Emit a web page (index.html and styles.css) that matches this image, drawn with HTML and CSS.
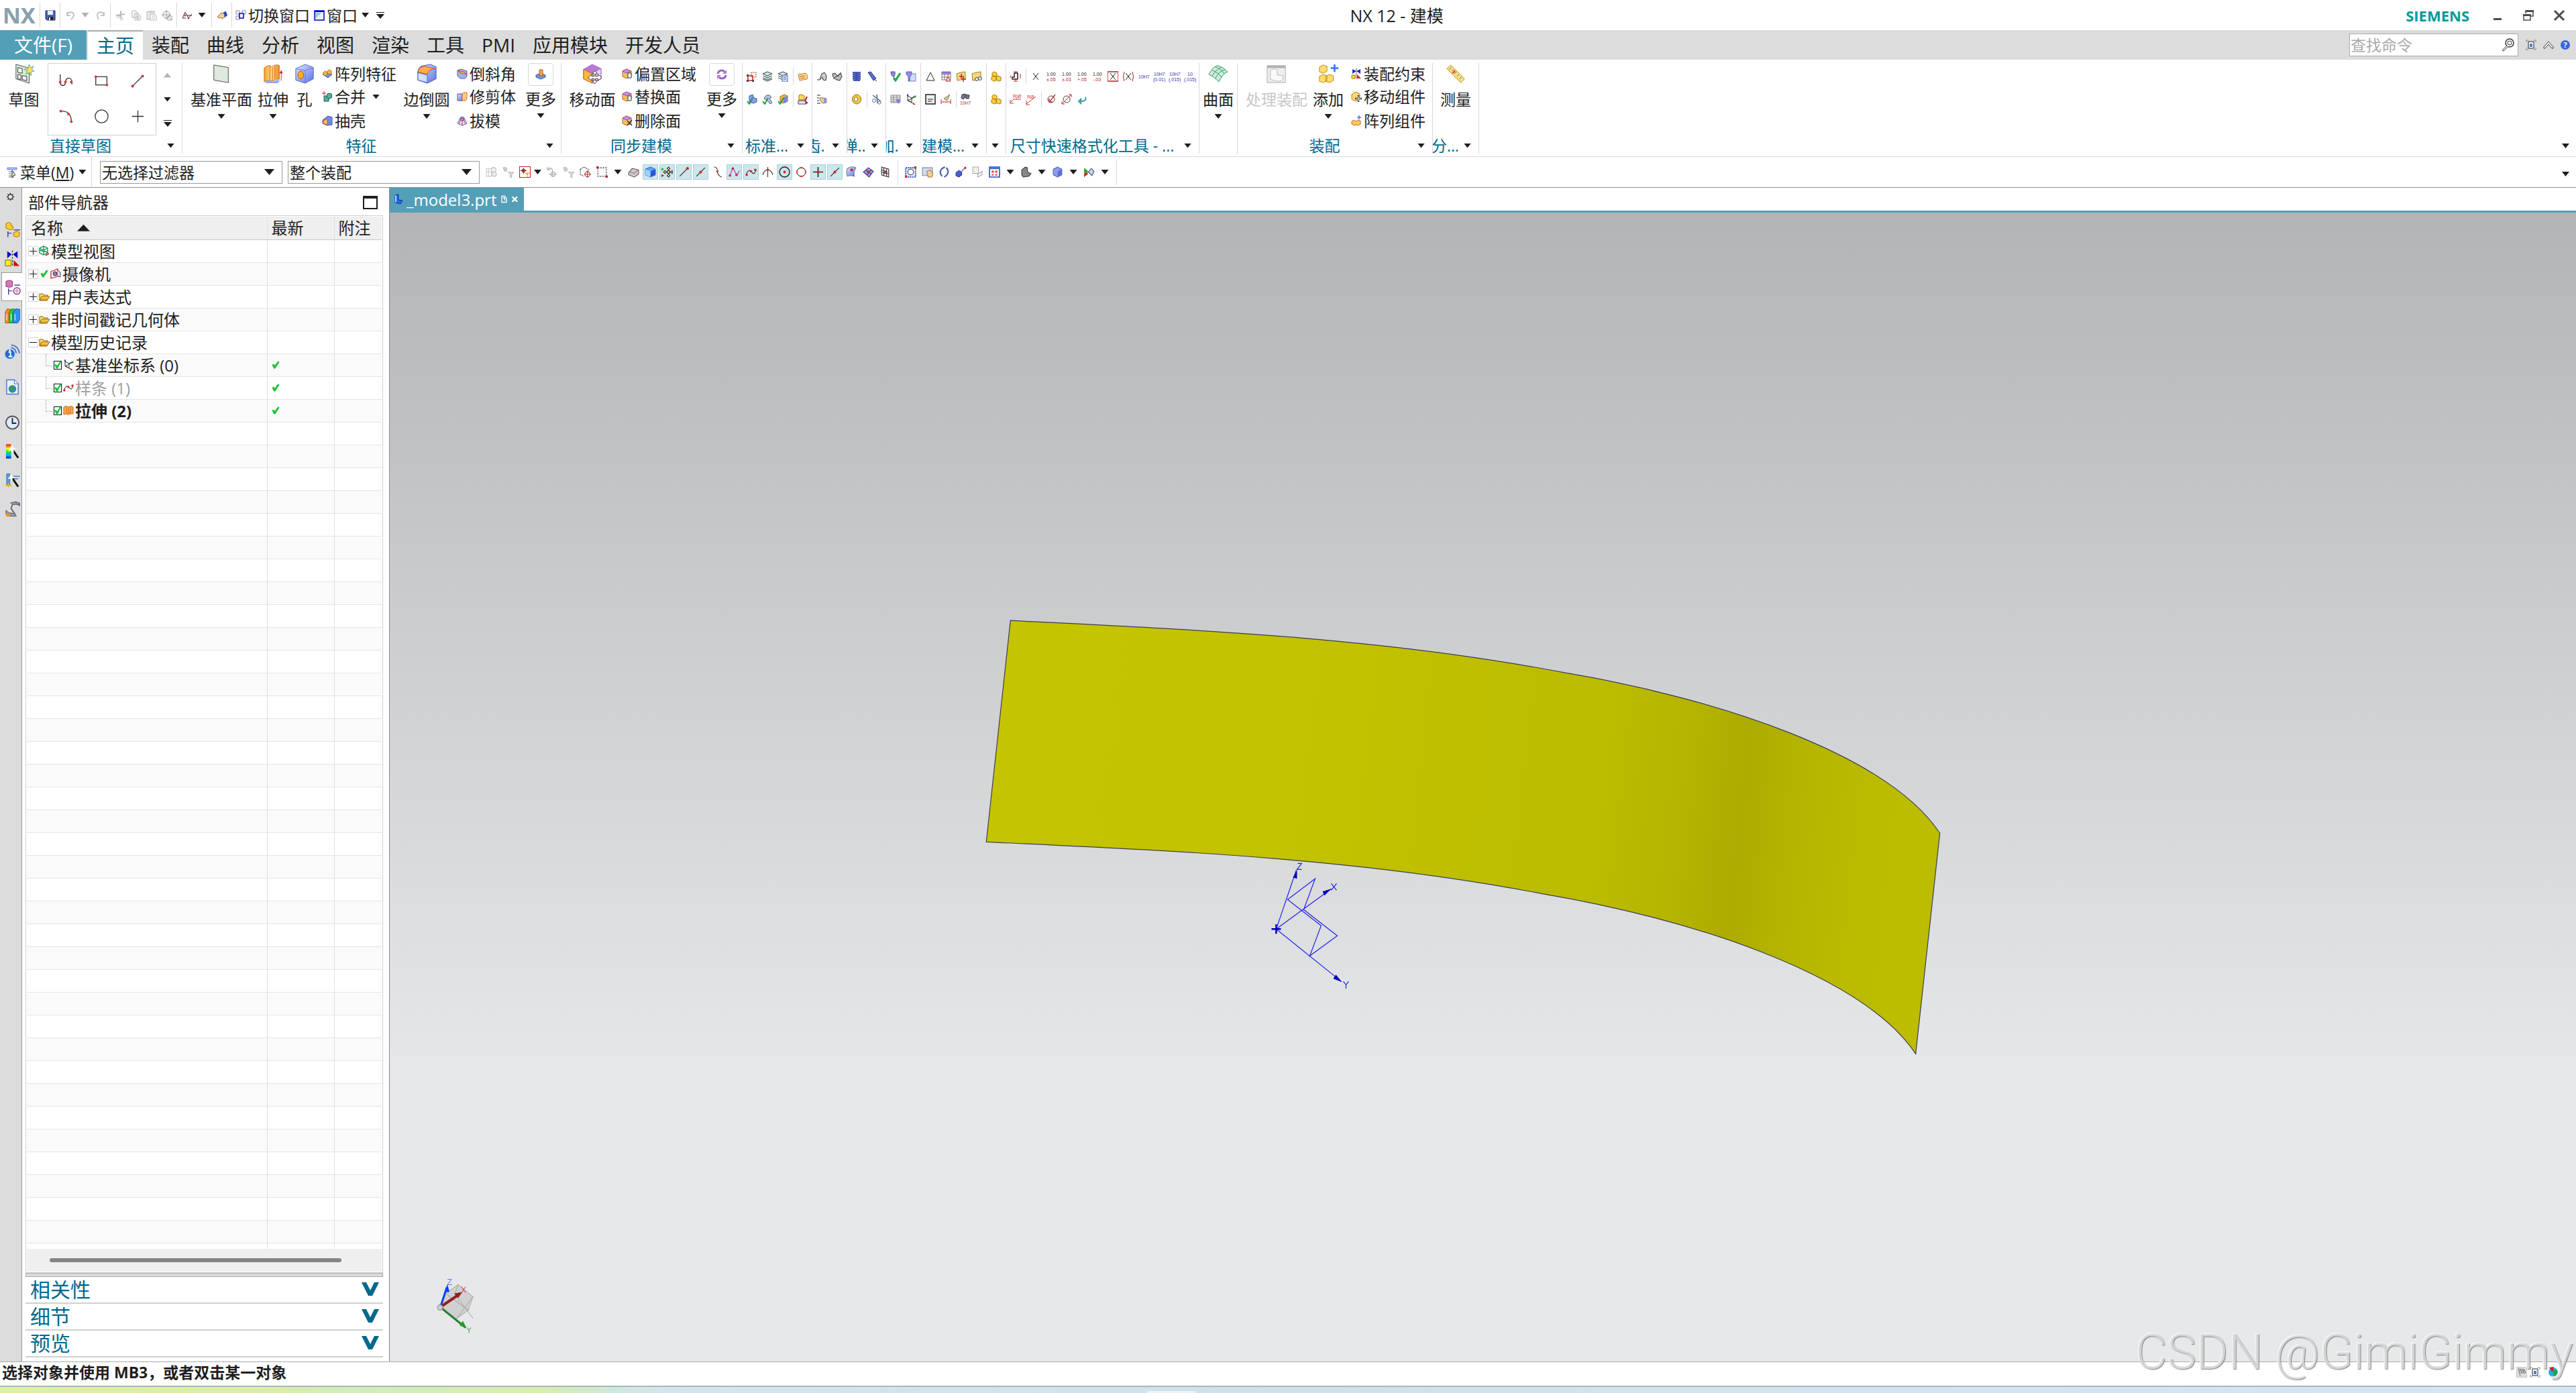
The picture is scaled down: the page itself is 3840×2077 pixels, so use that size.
FILE: index.html
```html
<!DOCTYPE html>
<html lang="zh-CN">
<head>
<meta charset="utf-8">
<title>NX 12 - 建模</title>
<link rel="stylesheet" href="styles.css">
</head>
<body>
<svg class="defs" aria-hidden="true">
<defs>
<linearGradient id="gOrange" x1="0" x2="1"><stop offset="0" stop-color="#f0a030"/><stop offset=".5" stop-color="#ffe08a"/><stop offset="1" stop-color="#e88a20"/></linearGradient>
<linearGradient id="gBlue" x1="0" x2="1" y2="1"><stop offset="0" stop-color="#dfe8ff"/><stop offset="1" stop-color="#5a72e0"/></linearGradient>
<linearGradient id="gFolder" y2="1" x2="0"><stop offset="0" stop-color="#ffe27a"/><stop offset="1" stop-color="#d98a00"/></linearGradient>
<linearGradient id="gRain" y2="1" x2="0"><stop offset="0" stop-color="#f00"/><stop offset=".3" stop-color="#ff0"/><stop offset=".55" stop-color="#0e2"/><stop offset=".8" stop-color="#0af"/><stop offset="1" stop-color="#00c"/></linearGradient>
</defs>
<symbol id="save" viewBox="0 0 16 16"><path d="M1 1h14v14H3l-2-2z" fill="#4a64b8" stroke="#182870"/><path d="M4 1h8v6H4z" fill="#e8f0ff"/><path d="M5 10h7v5H5z" fill="#222"/><path d="M6 11h2v4H6z" fill="#fff"/></symbol>
<symbol id="undo" viewBox="0 0 16 16"><path d="M3 7c1-5 10-5 10 0 0 3-2 5-4 7M3 3v5h5" fill="none" stroke="#c4c4c4" stroke-width="2"/></symbol>
<symbol id="redo" viewBox="0 0 16 16"><path d="M13 7C12 2 3 2 3 7c0 3 1 5 2 7M13 3v5H8" fill="none" stroke="#c4c4c4" stroke-width="2"/></symbol>
<symbol id="cut" viewBox="0 0 16 16"><path d="M8 1v9M1 8l13-2M8 9l-3-1M8 10l1 2" stroke="#bbb" stroke-width="2" fill="none"/><circle cx="4" cy="9.500" r="2" fill="none" stroke="#bbb"/><circle cx="9" cy="13" r="2" fill="none" stroke="#bbb"/></symbol>
<symbol id="copy" viewBox="0 0 16 16"><path d="M2 1h5l3 3v7H2zM6 5h5l3 3v7H6z" fill="#f4f4f4" stroke="#b8b8b8"/><path d="M8 9h4M8 11h4M8 13h4" stroke="#b8b8b8"/></symbol>
<symbol id="paste" viewBox="0 0 16 16"><path d="M1 2h11v12H1z" fill="#e8e8e8" stroke="#b8b8b8"/><path d="M4 1h5v3H4z" fill="#ccc"/><path d="M6 6h6l3 3v6H6z" fill="#fff" stroke="#b8b8b8"/><path d="M8 9h5M8 12h5" stroke="#b8b8b8"/></symbol>
<symbol id="target" viewBox="0 0 16 16"><circle cx="7" cy="7" r="5" fill="none" stroke="#999"/><path d="M7 0v14M0 7h14M9 9h6v6H9zM10 10l4 4" fill="none" stroke="#999"/></symbol>
<symbol id="zig" viewBox="0 0 16 16"><path d="M1 12 5 3l5 9 5-6" fill="none" stroke="#333"/><path d="M1 12h5M8 8h7" stroke="#333"/><circle cx="5" cy="8" r="1.500" fill="#d33"/><circle cx="10" cy="12" r="1.500" fill="#d33"/></symbol>
<symbol id="hand" viewBox="0 0 16 16"><path d="M1 10 7 4l4 1 2 5-5 3-2-2-3 1z" fill="#f3cf98" stroke="#9a7040"/><path d="M10 3l4-1 2 6-4 3z" fill="#3348b0"/></symbol>
<symbol id="switch" viewBox="0 0 16 16"><path d="M1 1h5v5H1zM10 1h5v5h-5zM1 9h5v5H1z" fill="#fff" stroke="#789"/><path d="M6 5h6v7H6z" fill="#fff" stroke="#00c" stroke-width="1.500"/></symbol>
<symbol id="window" viewBox="0 0 16 16"><path d="M1 1h14v14H1z" fill="#e4f2f8" stroke="#00c" stroke-width="1.500"/><path d="M1 1h14v2H1z" fill="#00c"/><path d="M2 4h9L2 13z" fill="#9cc8dc"/></symbol>
<symbol id="more" viewBox="0 0 14 10"><path d="M1 0h12v1H1zM1 3h12L7 10z" fill="#1e1e1e"/></symbol>
<symbol id="plane" viewBox="0 0 32 32"><path d="M4 2 27 6v24L4 26z" fill="#dfeadf" stroke="#444"/></symbol>
<symbol id="sketch" viewBox="0 0 32 32"><path d="M3 1 24 7v24L3 24z" fill="#d9ead9" stroke="#445"/><path d="M6 6l7 2v7l-7-1zM6 17l5 1v7l-5-1zM13 19l7 1v7l-7-2z" fill="#f4f8f4" stroke="#333"/><path d="M24 1l2 5 5-2-3 5 4 3-5 1v6l-3-5-5 3 2-6-5-2 6-1z" fill="#ffe640" stroke="#58a0b8"/></symbol>
<symbol id="extrude" viewBox="0 0 32 32"><path d="M2 7q7-7 12-2 7-5 12-2v22q-5-2-11 3-8-4-13 1z" fill="url(#gOrange)" stroke="#d87010"/><path d="M11 4v22M15 6v22M19 4v20" stroke="#e06010"/><path d="M3 28q8-4 12 1 7-5 12-2l-4 4H5z" fill="#8eaaf0"/><path d="M29 27V12M27 15l2-4 2 4z" stroke="#d22" fill="#d22"/></symbol>
<symbol id="hole" viewBox="0 0 32 32"><path d="M2 8 17 1l13 5v18l-13 7-15-5z" fill="url(#gBlue)" stroke="#4c60c8"/><path d="M2 8l15 3 13-5M17 11v19" fill="none" stroke="#6478d8"/><ellipse cx="10" cy="18" rx="4.500" ry="6" fill="#ffb020" stroke="#d04010"/></symbol>
<symbol id="blend" viewBox="0 0 32 32"><path d="M2 13Q3 4 11 3l11-2 9 4v19l-14 7-15-5z" fill="url(#gBlue)" stroke="#3c50b8"/><path d="M2 13Q4 5 12 4l18 4q-11 0-13 9z" fill="#ffb04a" stroke="#e04020"/><path d="M2 14l15 4v12L2 26z" fill="#cfe0f8" stroke="#5068b8"/></symbol>
<symbol id="array" viewBox="0 0 16 16"><path d="M1 9l7-3 7 3-6 5z" fill="#6f94e0" stroke="#4060b0"/><path d="M2 6l3-2 3 2v3L5 11 2 9zM8 4l3-2 3 2v3l-3 2-3-2z" fill="#f5b553" stroke="#b87020"/></symbol>
<symbol id="unite" viewBox="0 0 16 16"><path d="M3 7h7v8H3z" fill="#58b09a" stroke="#186050"/><circle cx="11" cy="7" r="4" fill="#58b09a" stroke="#186050"/><path d="M3 0v6M0 3h6" stroke="#d22"/></symbol>
<symbol id="shell" viewBox="0 0 16 16"><path d="M1 7 9 1l6 2v11l-7 1-7-3z" fill="#6f8ce0" stroke="#3c50a8"/><path d="M2 8l6-3v9l-6-2z" fill="#ffc070" stroke="#d85020"/></symbol>
<symbol id="chamfer" viewBox="0 0 16 16"><path d="M1 3l5-2 9 3v8l-3 3H5L1 11z" fill="#9fb2ee" stroke="#4a5cb0"/><path d="M1 3l9 2 5 4-9-2z" fill="#ffb04a" stroke="#d84020"/></symbol>
<symbol id="trim" viewBox="0 0 16 16"><path d="M1 4h8v10H1z" fill="url(#gBlue)" stroke="#3c50a8"/><path d="M8 4l2-2h5v10l-2 2H8z" fill="#ffd070" stroke="#d22" stroke-dasharray="2 1"/></symbol>
<symbol id="draft" viewBox="0 0 16 16"><path d="M1 12 5 4h6l4 8-7 3z" fill="#dfe6ff" stroke="#4a62c8"/><circle cx="8" cy="5" r="3" fill="none" stroke="#4a62c8"/><path d="M8 3v12M3 13 7 4M13 13 9 4" stroke="#d22"/></symbol>
<symbol id="boss" viewBox="0 0 16 16"><path d="M1 9l7-3 7 3v3l-7 3-7-3z" fill="#6f94e0" stroke="#3c58a8"/><path d="M6 1h5v9H6z" fill="#f5a553" stroke="#b86010"/></symbol>
<symbol id="moveface" viewBox="0 0 32 32"><path d="M2 9 16 1l14 7v16L16 31 2 24z" fill="#e4d0f4" stroke="#9050b0"/><path d="M2 9l14 7 14-8L16 1z" fill="#b878d8"/><path d="M2 9l14 7v15L2 24z" fill="#f8b840" stroke="#d06010"/><path d="M20 11l4 5h-3v4h4v-3l6 5-6 5v-3h-4v3h3l-4 5-4-5h3v-3h-4v3l-6-5 6-5v3h4v-4h-3z" fill="#fff" stroke="#333"/></symbol>
<symbol id="face" viewBox="0 0 16 16"><path d="M1 4 7 1l7 3v8l-7 3-6-3z" fill="#f0c060" stroke="#c06020"/><path d="M1 4l6-3 7 3-7 3z" fill="#c890e0" stroke="#9050b0"/><path d="M9 7h5v7H9z" fill="#fff" stroke="#333"/></symbol>
<symbol id="facex" viewBox="0 0 16 16"><path d="M1 4 7 1l7 3v8l-7 3-6-3z" fill="#f0c060" stroke="#c06020"/><path d="M1 4l6-3 7 3-7 3z" fill="#c890e0" stroke="#9050b0"/><path d="M8 8l7 7M15 7l-7 8" stroke="#333" stroke-width="1.500"/></symbol>
<symbol id="cycle" viewBox="0 0 16 16"><path d="M2 7c1-6 8-6 10-3M14 9c-1 6-8 6-10 3" fill="none" stroke="#9a5cc0" stroke-width="3"/><path d="M15 1v6H9zM1 15V9h6z" fill="#b878d8"/></symbol>
<symbol id="spline" viewBox="0 0 24 24"><path d="M2 1v13c0 8 9 8 9 0 0-9 11-8 11 0v4" fill="none" stroke="#333" stroke-width="1.500"/><circle cx="2" cy="14" r="2.200" fill="#d33"/><circle cx="11" cy="14" r="2.200" fill="#d33"/><circle cx="21" cy="14" r="2.200" fill="#d33"/></symbol>
<symbol id="rect" viewBox="0 0 24 24"><path d="M2 5h19v14H2z" fill="none" stroke="#333" stroke-width="1.500"/><circle cx="2" cy="5" r="2.200" fill="#d33"/><circle cx="21" cy="19" r="2.200" fill="#d33"/></symbol>
<symbol id="line" viewBox="0 0 24 24"><path d="M3 21 20 4" stroke="#333" stroke-width="1.500"/><circle cx="3" cy="21" r="2.400" fill="#d33"/><circle cx="20" cy="4" r="2.400" fill="#d33"/></symbol>
<symbol id="arc" viewBox="0 0 24 24"><path d="M3 3q17-1 18 17" fill="none" stroke="#333" stroke-width="1.500"/><circle cx="3" cy="3" r="2.200" fill="#d33"/><circle cx="16" cy="8" r="2.200" fill="#d33"/><circle cx="21" cy="21" r="2.200" fill="#d33"/></symbol>
<symbol id="circle" viewBox="0 0 24 24"><circle cx="12" cy="12" r="11" fill="none" stroke="#333" stroke-width="1.500"/></symbol>
<symbol id="plus" viewBox="0 0 24 24"><path d="M12 2v20M2 12h20" stroke="#333" stroke-width="1.500"/></symbol>
<symbol id="redsq" viewBox="0 0 16 16"><path d="M2 7h7v7H2z" fill="#fff" stroke="#c22" stroke-width="1.500"/><path d="M7 2h7v7H7z" fill="none" stroke="#c22" stroke-dasharray="2 1"/><path d="M0 5h3v3H0zM8 13h3v3H8zM0 13h3v3H0z" fill="#444"/></symbol>
<symbol id="layers" viewBox="0 0 16 16"><path d="M1 4l7-3 7 3-7 3zM1 7l7 3 7-3M1 10l7 3 7-3M1 12l7 3 7-3" fill="#d4e8dc" stroke="#345"/></symbol>
<symbol id="layers2" viewBox="0 0 16 16"><path d="M1 4l7-3 7 3-7 3zM1 7l7 3 7-3M1 10l7 3" fill="#d4e8dc" stroke="#345"/><path d="M7 6h8v10H7z" fill="#cfdcff" stroke="#56a"/><path d="M9 9h4M9 12h4" stroke="#56a"/></symbol>
<symbol id="note" viewBox="0 0 16 16"><path d="M1 5l11-2 3 4-1 5-11 2z" fill="#ffd890" stroke="#c87830"/><path d="M3 8l8-1M4 11l7-1" stroke="#c86020"/></symbol>
<symbol id="okblue" viewBox="0 0 16 16"><path d="M4 3l5-2 2 5 4 1v5l-5 2-6-2z" fill="#7fa0e8" stroke="#3c58b0"/><path d="M1 11l3 4 5-9" fill="none" stroke="#1fa030" stroke-width="2"/></symbol>
<symbol id="okwork" viewBox="0 0 16 16"><path d="M3 7q2-6 8-5l3 3-3 2 4 6-3 2-5-6z" fill="#b8c8e8" stroke="#456"/><path d="M1 11l3 4 5-9" fill="none" stroke="#1fa030" stroke-width="2"/></symbol>
<symbol id="okorange" viewBox="0 0 16 16"><path d="M4 4l6-3 5 2v8l-6 3-5-2z" fill="#f7b040" stroke="#c06010"/><path d="M9 5l6-2v8l-6 3z" fill="#6f8ce0"/><path d="M1 11l3 4 5-9" fill="none" stroke="#1fa030" stroke-width="2"/></symbol>
<symbol id="edit" viewBox="0 0 16 16"><path d="M2 2l4-1 4 2v6H2z" fill="#ffd860" stroke="#a07010"/><path d="M1 10h11v5H1z" fill="#fff" stroke="#334"/><path d="M3 12h1M6 12h1M9 12h1" stroke="#334"/><path d="M14 4l-3 7" stroke="#c22" stroke-width="2"/><path d="M11 10l5 3-4 3z" fill="#b020b0"/></symbol>
<symbol id="gear" viewBox="0 0 16 16"><path d="M1 13h4l3-9 4-2 3 5-1 7-4-1-1-4-4 4" fill="#ccc" stroke="#333"/></symbol>
<symbol id="gear2" viewBox="0 0 16 16"><path d="M1 4l4-1 4 5 4-5 2 5-3 6-5-1-5-4z" fill="#bbb" stroke="#333"/><path d="M2 12L14 2" stroke="#333"/></symbol>
<symbol id="pick" viewBox="0 0 16 16"><path d="M1 2h5M1 6h3M1 10h3M1 14h5" stroke="#222"/><path d="M5 6h6l4 1v6l-6 1-3-4z" fill="#f3cf98" stroke="#9a7040"/><path d="M11 7h4v6h-4z" fill="#8c9ae0"/></symbol>
<symbol id="spring" viewBox="0 0 16 16"><path d="M2 2h12M2 5h12M2 8h12M2 11h12M3 14h10" stroke="#4a5cc0" stroke-width="1.800"/><path d="M2 3l12 1M2 6l12 1M2 9l12 1M2 12l12 1" stroke="#2a3a90"/></symbol>
<symbol id="spring2" viewBox="0 0 16 16"><path d="M2 2l4-1 8 10-4 3z" fill="#5a6cd0" stroke="#2a3a90"/><path d="M11 12l4 3" stroke="#2a3a90"/></symbol>
<symbol id="ring" viewBox="0 0 16 16"><ellipse cx="8" cy="8" rx="6.500" ry="7" fill="#f0c840" stroke="#907010"/><ellipse cx="7" cy="8" rx="2.500" ry="3.500" fill="#fff" stroke="#907010"/></symbol>
<symbol id="scissor" viewBox="0 0 16 16"><path d="M2 2l12 9M8 1l1 13" stroke="#567" stroke-width="1.500"/><circle cx="4" cy="10" r="2.500" fill="none" stroke="#56b"/><circle cx="12" cy="13" r="2.200" fill="none" stroke="#56b"/></symbol>
<symbol id="mill" viewBox="0 0 16 16"><path d="M1 1h6v4L5 9 2 6z" fill="#8c8ce0" stroke="#44a"/><path d="M5 10l3 4 7-11" fill="none" stroke="#22a838" stroke-width="3"/></symbol>
<symbol id="millp" viewBox="0 0 16 16"><path d="M6 4h9v11H6z" fill="#cfdcff" stroke="#78a"/><path d="M1 1h8v4L6 9v6H4V8L1 5z" fill="#8c8ce0" stroke="#66a"/></symbol>
<symbol id="grid" viewBox="0 0 16 16"><path d="M1 2h14v11H1zM1 5h14M1 8h14M1 11h14M5 2v11M10 2v11" fill="#e8eef8" stroke="#888"/><path d="M9 8h5v3l-2 4z" fill="#7a7ae0"/></symbol>
<symbol id="csys" viewBox="0 0 16 16"><path d="M3 0v10M3 10l12-6M3 10l10 5M3 3l6 3v7L3 9M9 6l5-3" fill="none" stroke="#333"/><path d="M2 3l1-3 1 3z" fill="#00c"/><path d="M12 4l4-2-1 4z" fill="#2a2"/><path d="M11 13l4 3h-4z" fill="#d22"/></symbol>
<symbol id="tri" viewBox="0 0 16 16"><path d="M8 2l6 12H2z" fill="none" stroke="#222"/></symbol>
<symbol id="table" viewBox="0 0 16 16"><path d="M2 1h13v12H2zM2 5h13M2 9h13M6 3v10M11 3v10" fill="#fff" stroke="#777"/><path d="M2 1h13v3H2z" fill="#9070d8"/><path d="M11 8l4 7H8z" fill="#f0d0d0" stroke="#c22"/></symbol>
<symbol id="folderp" viewBox="0 0 16 16"><path d="M1 4l6-2 7-1v11l-12 2z" fill="#f5d880" stroke="#a08020"/><path d="M8 4v7M5 8h7M11 9v7M8 12h7" stroke="#c22" stroke-width="1.500"/></symbol>
<symbol id="folderg" viewBox="0 0 16 16"><path d="M1 4l6-2 7-1v11l-12 2z" fill="#f5d880" stroke="#a08020"/><circle cx="8" cy="12" r="2.500" fill="#eee" stroke="#444"/><circle cx="13" cy="11" r="2.500" fill="#eee" stroke="#444"/></symbol>
<symbol id="form" viewBox="0 0 16 16"><path d="M1 1h14v14H1z" fill="#eee" stroke="#222" stroke-width="1.500"/><path d="M4 8h8M4 11h6" stroke="#222"/></symbol>
<symbol id="dim" viewBox="0 0 16 16"><path d="M1 8v7M15 8v7M1 12h14" stroke="#c22"/><path d="M14 1l-4 9-5-3z" fill="#d8d060" stroke="#778"/></symbol>
<symbol id="cubes" viewBox="0 0 16 16"><path d="M2 3l3-2 4 2v4l-3 1-4-1zM1 9l3-2 4 2v5l-3 1-4-2zM8 9l3-2 4 2v5l-3 1-4-2z" fill="#ffd040" stroke="#a87808"/></symbol>
<symbol id="ibeam" viewBox="0 0 16 16"><path d="M5 1h6M5 15h6M8 12v3M8 1v3M0 5v6M15 4v7M0 8h2" stroke="#c22"/><path d="M6 3h5v9H3V9h3z" fill="#fff" stroke="#222" stroke-width="1.500"/></symbol>
<symbol id="tx" viewBox="0 0 16 16"><path d="M4 3l8 10M12 3L4 13" stroke="#222"/></symbol>
<symbol id="txb" viewBox="0 0 16 16"><path d="M0 1h16v14H0z" fill="#fff" stroke="#a22" stroke-width="1.500"/><path d="M4 3l8 10M12 3L4 13" stroke="#222"/></symbol>
<symbol id="txp" viewBox="0 0 16 16"><path d="M2 1Q-1 8 2 15M14 1q3 7 0 14" fill="none" stroke="#a22"/><path d="M4 3l8 10M12 3L4 13" stroke="#222"/></symbol>
<symbol id="dia" viewBox="0 0 16 16"><circle cx="8" cy="8" r="5" fill="none" stroke="#444"/><path d="M14 1L6 11M5 7v5h5" fill="none" stroke="#c22" stroke-width="1.300"/></symbol>
<symbol id="dia2" viewBox="0 0 16 16"><circle cx="8" cy="8" r="5" fill="none" stroke="#444"/><path d="M15 1L1 15M11 1h4v4M1 11v4h4" fill="none" stroke="#c22"/></symbol>
<symbol id="ret" viewBox="0 0 16 16"><path d="M13 5q2 6-6 6M6 8l-3 3 3 3z" fill="none" stroke="#3aa0a0" stroke-width="2"/></symbol>
<symbol id="surf" viewBox="0 0 32 32"><path d="M1 17Q8 4 15 3q9 2 16 10-9 3-14 16Q11 21 1 17z" fill="#cfeadb" stroke="#2a9860"/><path d="M6 10q10 4 16 12M11 5q9 3 15 11M6 20q6-11 15-14M11 24Q17 12 27 9" fill="none" stroke="#2a9860"/></symbol>
<symbol id="proc" viewBox="0 0 32 32"><path d="M1 3h29v27H1z" fill="#eee" stroke="#aaa"/><path d="M1 3h29v4H1z" fill="#b4b4b4"/><path d="M6 11l6-3 5 2v8l9 1v7l-7 2-13-3z" fill="#fafafa" stroke="#bbb"/></symbol>
<symbol id="add" viewBox="0 0 32 32"><path d="M2 5l6-3 6 2v8l-6 3-6-2zM2 20l6-3 6 2v8l-6 3-6-2zM12 20l6-3 6 2v8l-6 3-6-2z" fill="#ffdc70" stroke="#b88818"/><path d="M26 1v12M20 7h12" stroke="#3a80f0" stroke-width="3"/></symbol>
<symbol id="constr" viewBox="0 0 16 16"><path d="M2 1l6 3-6 4zM14 1L8 4l6 4z" fill="#22c"/><path d="M8 0v16" stroke="#222" stroke-dasharray="2 1"/><path d="M1 10h5v5H1z" fill="#ffe620" stroke="#a07010"/><path d="M9 9l6 6H9z" fill="#c22"/></symbol>
<symbol id="movec" viewBox="0 0 16 16"><path d="M1 5l6-4 6 3v7l-6 4-6-3z" fill="#ffd878" stroke="#b88020"/><path d="M11 6v10M6 11h10" stroke="#222" stroke-width="2.500"/><path d="M11 7v8M7 11h8" stroke="#fff"/></symbol>
<symbol id="arrc" viewBox="0 0 16 16"><path d="M1 9l3-2 3 2 3-2 4 1v5l-3 2-3-1-3 1-4-2z" fill="#ffc860" stroke="#b87810"/><path d="M12 0v6M9 3h6" stroke="#3a80f0" stroke-width="1.500"/></symbol>
<symbol id="ruler" viewBox="0 0 32 32"><path d="M8 2l22 22-6 6L2 8z" fill="#ffe27a" stroke="#a88828"/><path d="M9 6l-3 3M13 9l-3 3M17 13l-3 3M21 17l-3 3M25 21l-3 3" stroke="#24c"/><path d="M15 11l-4 4" stroke="#d22" stroke-width="2"/></symbol>
<symbol id="menu" viewBox="0 0 16 16"><path d="M1 1h14v3H1z" fill="#a8baf4" stroke="#6f8ce8"/><path d="M3 7h8M3 10h8M3 13h8M3 15h8" stroke="#777"/><path d="M8 5l5 7-3 1-2 3z" fill="#ddd" stroke="#444"/></symbol>
<symbol id="ghost" viewBox="0 0 16 16"><path d="M1 3h7v11H1zM4 3v11M1 8h7" fill="none" stroke="#c8c8c8"/><circle cx="11" cy="5" r="3.500" fill="#eee" stroke="#bbb"/><circle cx="12" cy="11" r="3" fill="#eee" stroke="#bbb"/></symbol>
<symbol id="ghost2" viewBox="0 0 16 16"><path d="M1 2q6-2 5 4L3 7z" fill="#ccc" stroke="#bbb"/><path d="M8 8h8l-3 3v5h-2v-5z" fill="#ddd" stroke="#bbb"/></symbol>
<symbol id="filter" viewBox="0 0 16 16"><path d="M0 0h16v16H0z" fill="#fff" stroke="#c22" stroke-width="2"/><circle cx="6" cy="6" r="2" fill="none" stroke="#722"/><path d="M6 2v8M2 6h8" stroke="#722"/><path d="M8 9h7l-3 3v3h-1v-3z" fill="#f5b020"/></symbol>
<symbol id="ghost3" viewBox="0 0 16 16"><path d="M2 5q4-5 7 0v10M2 1v4h4M4 11h11" fill="none" stroke="#bbb" stroke-width="1.500"/><circle cx="10" cy="11" r="3" fill="none" stroke="#aaa"/></symbol>
<symbol id="dotcube" viewBox="0 0 16 16"><path d="M1 4l5-3 6 3v5M1 4v7l5 3" fill="none" stroke="#333" stroke-dasharray="2 1"/><circle cx="11" cy="11" r="3.500" fill="none" stroke="#c22"/><path d="M11 6v10M6 11h10" stroke="#c22"/></symbol>
<symbol id="marquee" viewBox="0 0 16 16"><path d="M2 2h12v12H2z" fill="none" stroke="#333" stroke-dasharray="2 1.500"/><path d="M0 0h3v3H0zM13 13h3v3h-3z" fill="#c22"/></symbol>
<symbol id="shaded" viewBox="0 0 16 16"><path d="M1 9l5-6 9 2v6l-6 4-8-3z" fill="#ccc" stroke="#555"/><path d="M3 8l6 2 5-5" fill="none" stroke="#c66"/></symbol>
<symbol id="cube" viewBox="0 0 16 16"><path d="M1 4l7-3 7 3v8l-7 3-7-3z" fill="#58a8f8" stroke="#4858c8"/><path d="M8 7l7-3v8l-7 3z" fill="#2858d8"/><path d="M1 4l7 3v8l-7-3z" fill="#9cd4ff"/></symbol>
<symbol id="cubeb" viewBox="0 0 16 16"><path d="M2 4l6-3 6 3v8l-6 3-6-3z" fill="#8c9cf0" stroke="#4858b8"/><path d="M8 7l6-3v8l-6 3z" fill="#6070d0"/></symbol>
<symbol id="snap" viewBox="0 0 16 16"><path d="M0 2l4 2-4 2z" fill="#2a2"/><path d="M0 11l4 2-4 2z" fill="#c22"/><path d="M10 1l2 2-2 2-2-2zM10 11l2 2-2 2-2-2zM5 6l2 2-2 2-2-2zM15 6l1 2-1 2-2-2z" fill="#fff" stroke="#222"/><circle cx="10" cy="8" r="2" fill="#ffe020" stroke="#222"/></symbol>
<symbol id="lend" viewBox="0 0 16 16"><path d="M2 14L13 3" stroke="#222"/><circle cx="13" cy="3" r="2" fill="#d22"/></symbol>
<symbol id="lmid" viewBox="0 0 16 16"><path d="M2 14L14 2" stroke="#222"/><circle cx="8" cy="8" r="2" fill="#d22"/></symbol>
<symbol id="scurve" viewBox="0 0 16 16"><path d="M3 1q5 0 5 6t6 8" fill="none" stroke="#333"/><circle cx="8" cy="7" r="1.500" fill="#d22"/></symbol>
<symbol id="pole" viewBox="0 0 16 16"><path d="M2 13L6 2l6 11 3-7" fill="none" stroke="#a2c"/><circle cx="2" cy="13" r="1.700" fill="#d22"/><circle cx="6" cy="3" r="1.700" fill="#d22"/><circle cx="11" cy="12" r="1.700" fill="#d22"/></symbol>
<symbol id="wave" viewBox="0 0 16 16"><path d="M1 12Q5 2 9 8t6-4" fill="none" stroke="#222"/><circle cx="2" cy="12" r="1.700" fill="#d22"/><circle cx="8" cy="7" r="1.700" fill="#d22"/><circle cx="14" cy="5" r="1.700" fill="#d22"/></symbol>
<symbol id="inter" viewBox="0 0 16 16"><path d="M8 1v14M1 12q2-7 7-7t7 7" fill="none" stroke="#333"/><circle cx="8" cy="5" r="1.700" fill="#d22"/></symbol>
<symbol id="center" viewBox="0 0 16 16"><circle cx="8" cy="8" r="7" fill="none" stroke="#222" stroke-width="1.300"/><circle cx="8" cy="8" r="1.800" fill="#d22"/></symbol>
<symbol id="quad" viewBox="0 0 16 16"><circle cx="8" cy="8" r="6" fill="none" stroke="#444"/><path d="M6 1h4v2H6zM6 13h4v2H6zM1 6h2v4H1zM13 6h2v4h-2z" fill="#d44"/></symbol>
<symbol id="point" viewBox="0 0 16 16"><path d="M8 1v14M1 8h14" stroke="#222" stroke-width="1.500"/><circle cx="8" cy="8" r="1.800" fill="#d22"/></symbol>
<symbol id="onface" viewBox="0 0 16 16"><path d="M2 3q6-4 12-1-4 6-2 12-5-2-10 0-2-6 0-11z" fill="url(#gBlue)" stroke="#67a"/><circle cx="8" cy="5" r="2" fill="#d22"/></symbol>
<symbol id="mesh" viewBox="0 0 16 16"><path d="M1 8l7-6 7 5-6 8z" fill="#9a9ad8" stroke="#338"/><path d="M4 5l8 6M6 12l6-7" stroke="#338"/><circle cx="8" cy="8" r="1.800" fill="#d22"/></symbol>
<symbol id="gridp" viewBox="0 0 16 16"><path d="M3 1l10 3v11L3 12zM3 5l10 3M3 8l10 3M6 2v11M10 3v11" fill="none" stroke="#333"/><circle cx="8" cy="8" r="1.500" fill="#d22"/></symbol>
<symbol id="zoomb" viewBox="0 0 16 16"><path d="M1 2h14v13H1z" fill="#dfe6ff" stroke="#24c" stroke-dasharray="2 1" stroke-width="1.500"/><circle cx="8" cy="8" r="4" fill="#fff" stroke="#446"/><path d="M13 0h3v3h-3zM0 13h3v3H0z" fill="#c22"/></symbol>
<symbol id="pan" viewBox="0 0 16 16"><path d="M1 2h14v11H1z" fill="#cfdcf8" stroke="#78a"/><path d="M7 7l5-2 4 5-2 5H9z" fill="#f3cf98" stroke="#a07840"/></symbol>
<symbol id="rotate" viewBox="0 0 16 16"><path d="M5 14Q0 8 5 3l4-2M11 2q5 5 0 11l-3 2" fill="none" stroke="#4a5ca8" stroke-width="2"/></symbol>
<symbol id="persp" viewBox="0 0 16 16"><path d="M1 9l4-3 4 2v4l-4 3-4-2z" fill="#4a5cd8" stroke="#339"/><path d="M9 7l5-5" stroke="#99d" stroke-width="2"/><circle cx="14" cy="2" r="1.500" fill="#d22"/></symbol>
<symbol id="ghost4" viewBox="0 0 16 16"><path d="M1 1h8v9H1zM8 11l6-4v5l-6 3zM3 4h1M6 4h1M3 7h1" fill="#f4f4f4" stroke="#aaa"/></symbol>
<symbol id="views" viewBox="0 0 16 16"><path d="M1 1h14v14H1z" fill="#fff" stroke="#2a4cc0" stroke-width="1.500"/><path d="M1 1h14v3H1z" fill="#4a70d8"/><path d="M4 6h3v3H4zM9 6h3v3H9zM4 11h3v2H4zM9 11h3v2H9z" fill="#d44"/></symbol>
<symbol id="bracket" viewBox="0 0 16 16"><path d="M2 5l5-4 3 1v6l5 2-3 4-8 1-2-3z" fill="#888" stroke="#333"/></symbol>
<symbol id="clip" viewBox="0 0 16 16"><path d="M1 2l6 5-6 3z" fill="#2a2"/><path d="M1 10l5-2v3l-5 4z" fill="#c22"/><path d="M7 8l4-5 4 4-3 6z" fill="#ccd4f4" stroke="#446"/></symbol>
<symbol id="screen" viewBox="0 0 16 16"><path d="M1 4V1h3M12 1h3v3M15 12v3h-3M4 15H1v-3" fill="none" stroke="#888"/><path d="M4 3h8v10H4z" fill="#fff" stroke="#222"/><path d="M6 6h4v5H6z" fill="#4a80d8"/></symbol>
<symbol id="search" viewBox="0 0 20 20"><circle cx="13" cy="7" r="6" fill="none" stroke="#333" stroke-width="1.500"/><circle cx="13" cy="7" r="3" fill="none" stroke="#333"/><path d="M9 11l-7 7 2 1 7-7" fill="#fff" stroke="#333"/></symbol>
<symbol id="collapse" viewBox="0 0 16 16"><path d="M8 3l7 8v2h-2L8 7l-5 6H1v-2z" fill="#fff" stroke="#333"/></symbol>
<symbol id="cog" viewBox="0 0 16 16"><path d="M8 1v14M1 8h14M3 3l10 10M13 3L3 13" stroke="#222" stroke-width="1.500"/><circle cx="8" cy="8" r="4.500" fill="#ddd" stroke="#222" stroke-width="1.500"/></symbol>
<symbol id="asmnav" viewBox="0 0 24 24"><path d="M2 3l4-2 4 2v3l3 1v4l-4 2-7-3zM14 17l5-2 4 2v5l-5 2-4-2z" fill="#ffd020" stroke="#a87008"/><path d="M5 15v9M5 18h6M14 13h10" stroke="#22a" stroke-width="1.300"/></symbol>
<symbol id="connav" viewBox="0 0 24 24"><path d="M4 1l7 5-7 6zM20 1l-7 5 7 6z" fill="#00c"/><path d="M12 0v24" stroke="#222" stroke-dasharray="3 2"/><path d="M1 15h9v9H1z" fill="#ffee20" stroke="#806010"/><path d="M14 15l9 9h-9z" fill="#c00"/></symbol>
<symbol id="partnav" viewBox="0 0 24 24"><path d="M1 3q5-3 10 0v8q-5 3-10 0z" fill="#d878b8" stroke="#803070"/><path d="M5 14v10M5 18h6M14 9h9" stroke="#22a" stroke-width="1.300"/><circle cx="18" cy="18" r="5" fill="#fff" stroke="#903080" stroke-width="1.500"/><circle cx="18" cy="18" r="1.800" fill="none" stroke="#903080"/></symbol>
<symbol id="books" viewBox="0 0 24 24"><path d="M1 6l3-5 6 1-3 4v17H1z" fill="#f09020" stroke="#a85808"/><path d="M7 6l4-5 6 1-4 4v17H7z" fill="#30c840" stroke="#108020"/><path d="M13 6l4-5 7 1v15l-4 6h-7z" fill="#3090f0" stroke="#1050a0"/><path d="M3 9v10M10 9v10M16 9v10" stroke="#fff"/></symbol>
<symbol id="info" viewBox="0 0 24 24"><circle cx="8" cy="16" r="7.500" fill="#1e70d8"/><path d="M6 13h3v7M6 20h6" stroke="#fff" stroke-width="2" fill="none"/><circle cx="8" cy="10.500" r="1.400" fill="#fff"/><path d="M10 6q7 1 8 9M10 2q11 1 13 13" fill="none" stroke="#4a78d0" stroke-width="2"/></symbol>
<symbol id="web" viewBox="0 0 24 24"><path d="M3 1h12l6 6v16H3z" fill="#e8f2ff" stroke="#3868c0" stroke-width="1.300"/><path d="M15 1v6h6" fill="#fff" stroke="#3868c0"/><circle cx="12" cy="15" r="6" fill="#3a80d0"/><path d="M8 12l6-2 2 4-4 5-3-2z" fill="#38a040"/></symbol>
<symbol id="clock" viewBox="0 0 24 24"><circle cx="12" cy="12" r="10" fill="#dfeaff" stroke="#555" stroke-width="2"/><path d="M12 5v8h6" fill="none" stroke="#222" stroke-width="2"/></symbol>
<symbol id="rain" viewBox="0 0 24 24"><path d="M2 1h8v22H2z" fill="url(#gRain)"/><path d="M12 9l9 13" stroke="#111" stroke-width="3"/><path d="M12 1l1 5 5 1-4 3v5l-4-4-5 1 3-5z" fill="#fff"/></symbol>
<symbol id="wand" viewBox="0 0 24 24"><path d="M3 2h5v17H3z" fill="#5a9ce0" stroke="#3a78c0"/><path d="M12 6h12M12 10h9" stroke="#4a80c0" stroke-width="1.500"/><path d="M12 9l9 13" stroke="#111" stroke-width="3"/><path d="M11 2l1 4 4 1-4 2v4l-3-3-4 0 3-4z" fill="#fff"/><path d="M1 20h10M6 17v6" stroke="#f0b020" stroke-width="2"/></symbol>
<symbol id="robot" viewBox="0 0 24 24"><path d="M9 3l8-2 6 2v3l-5-2-6 1-2 6 6 9" fill="none" stroke="#667" stroke-width="2"/><path d="M2 14l5 4 9 1 2 4H8l-6-3z" fill="#99a" stroke="#557"/><circle cx="5" cy="21" r="3" fill="#f09020"/></symbol>
<symbol id="axis3" viewBox="0 0 16 16"><path d="M1 4l6-3 6 3v7l-6 3-6-3zM1 4l6 3 6-3M7 1v13M1 7l12 3" fill="none" stroke="#109050" stroke-width="1.300"/><path d="M10 15l5-3" stroke="#e22" stroke-width="2"/></symbol>
<symbol id="camera" viewBox="0 0 16 16"><path d="M1 5l10-4v11L1 15z" fill="#fff" stroke="#c22" stroke-width="1.300"/><circle cx="7" cy="8" r="3" fill="#88a" stroke="#226"/><path d="M11 3l4 3v7l-4-1" fill="#ddd" stroke="#446"/></symbol>
<symbol id="folder" viewBox="0 0 16 16"><path d="M1 14V4h5l1 2h6v3" fill="#ffe27a" stroke="#8a6000"/><path d="M1 14l3-6h12l-4 6z" fill="url(#gFolder)" stroke="#8a6000"/></symbol>
<symbol id="check" viewBox="0 0 14 14"><path d="M1 7l3-1 1 3 6-8 2 1-7 11H4z" fill="#10d030" stroke="#0a9020" stroke-width=".6"/></symbol>
<symbol id="extr" viewBox="0 0 16 16"><path d="M1 3q4-3 7 0 4-3 7 0v10q-4-1-7 1-4-2-7 0z" fill="#f7b050" stroke="#d86010"/><path d="M5 3v10M8 4v10M11 3v10" stroke="#d86010"/></symbol>
<symbol id="chev" viewBox="0 0 26 20"><path d="M0 0h7l6 12 6-12h7L16 20h-6z" fill="#00688c"/></symbol>
<symbol id="part" viewBox="0 0 16 16"><path d="M3 2l5-1v8l6 1-3 5-8-2z" fill="#2a68e8" stroke="#0830a8"/><path d="M3 2l2 1v9l-2 1z" fill="#a8d0ff"/></symbol>
<symbol id="pin" viewBox="0 0 10 12"><path d="M1 1h5l3 4v6H1zM3 4h3v4" fill="none" stroke="#fff" stroke-width="1.500"/></symbol>
<symbol id="flag" viewBox="0 0 16 16"><path d="M0 0h16v16H0z" fill="#ddd" stroke="#bbb"/><path d="M3 3l3 11M3 3l9 1 2 5H5M6 4l3 5M10 4l1 5M4 6h9" stroke="#777" fill="none"/></symbol>
<symbol id="globe" viewBox="0 0 16 16"><circle cx="8" cy="8" r="7" fill="#20b0e0"/><path d="M8 3l6 3-1 7-4 1-1-5z" fill="#20a040"/><path d="M2 1l7-1-2 8z" fill="#d02020"/></symbol>
</svg>

<header class="titlebar">
  <div class="logo">NX</div>
  <div class="quick">
    <i class="vsep"></i>
    <button class="cell" aria-label="保存"><svg><use href="#save"/></svg></button>
    <i class="vsep"></i>
    <button class="cell" aria-label="撤消"><svg><use href="#undo"/></svg></button>
    <button class="drop off" aria-label="撤消列表"><i class="caret"></i></button>
    <button class="cell" aria-label="重做"><svg><use href="#redo"/></svg></button>
    <i class="vsep"></i>
    <button class="cell" aria-label="剪切"><svg><use href="#cut"/></svg></button>
    <button class="cell" aria-label="复制"><svg><use href="#copy"/></svg></button>
    <button class="cell" aria-label="粘贴"><svg><use href="#paste"/></svg></button>
    <button class="cell" aria-label="重复"><svg><use href="#target"/></svg></button>
    <i class="vsep"></i>
    <button class="cell" aria-label="曲线"><svg><use href="#zig"/></svg></button>
    <button class="drop" aria-label="曲线列表"><i class="caret"></i></button>
    <i class="vsep"></i>
    <button class="cell" aria-label="触控"><svg><use href="#hand"/></svg></button>
    <i class="vsep"></i>
    <button class="named"><svg><use href="#switch"/></svg>切换窗口</button>
    <button class="named"><svg><use href="#window"/></svg>窗口<i class="caret"></i></button>
    <button class="drop" aria-label="更多"><svg class="morei"><use href="#more"/></svg></button>
  </div>
  <h1 class="title">NX 12 - 建模</h1>
  <div class="brand">SIEMENS</div>
  <div class="winctl">
    <button aria-label="最小化"><svg viewBox="0 0 18 18"><path d="M3 13h12v3H3z" fill="#4a4a50"/></svg></button>
    <button aria-label="还原"><svg viewBox="0 0 18 18"><path d="M5 6V2h11v8h-4" fill="none" stroke="#4a4a50" stroke-width="1.500"/><path d="M5 1h12v3H5zM1 7h12v3H1z" fill="#4a4a50"/><path d="M2 8h10v8H2z" fill="none" stroke="#4a4a50" stroke-width="1.500"/></svg></button>
    <button aria-label="关闭"><svg viewBox="0 0 18 18"><path d="M2 2l14 14M16 2L2 16" stroke="#4a4a50" stroke-width="3"/></svg></button>
  </div>
</header>

<nav class="tabs">
  <button class="file">文件(F)</button>
  <button class="tab on">主页</button>
  <button class="tab">装配</button>
  <button class="tab">曲线</button>
  <button class="tab">分析</button>
  <button class="tab">视图</button>
  <button class="tab">渲染</button>
  <button class="tab">工具</button>
  <button class="tab">PMI</button>
  <button class="tab">应用模块</button>
  <button class="tab">开发人员</button>
  <div class="find">
    <input type="search" placeholder="查找命令" aria-label="查找命令">
    <svg><use href="#search"/></svg>
  </div>
  <div class="help">
    <button aria-label="全屏"><svg><use href="#screen"/></svg></button>
    <button aria-label="最小化功能区"><svg><use href="#collapse"/></svg></button>
    <button class="ask" aria-label="帮助">?</button>
  </div>
</nav>

<section class="ribbon">
  <div class="group g-sketch">
    <div class="body">
      <button class="big"><svg><use href="#sketch"/></svg>草图</button>
      <div class="gallery">
        <button aria-label="轮廓"><svg><use href="#spline"/></svg></button>
        <button aria-label="矩形"><svg><use href="#rect"/></svg></button>
        <button aria-label="直线"><svg><use href="#line"/></svg></button>
        <button aria-label="圆弧"><svg><use href="#arc"/></svg></button>
        <button aria-label="圆"><svg><use href="#circle"/></svg></button>
        <button aria-label="点"><svg><use href="#plus"/></svg></button>
      </div>
      <div class="scroller">
        <button class="off" aria-label="上"><i class="caret up"></i></button>
        <button aria-label="下"><i class="caret"></i></button>
        <button aria-label="全部"><svg class="morei"><use href="#more"/></svg></button>
      </div>
    </div>
    <div class="foot"><span>直接草图</span><i class="caret"></i></div>
  </div>
  <div class="group g-feature">
    <div class="body">
      <button class="big"><svg><use href="#plane"/></svg>基准平面<i class="caret"></i></button>
      <button class="big"><svg><use href="#extrude"/></svg>拉伸<i class="caret"></i></button>
      <button class="big"><svg><use href="#hole"/></svg>孔</button>
      <div class="list">
        <button><svg><use href="#array"/></svg>阵列特征</button>
        <button><svg><use href="#unite"/></svg>合并<i class="caret"></i></button>
        <button><svg><use href="#shell"/></svg>抽壳</button>
      </div>
      <button class="big"><svg><use href="#blend"/></svg>边倒圆<i class="caret"></i></button>
      <div class="list">
        <button><svg><use href="#chamfer"/></svg>倒斜角</button>
        <button><svg><use href="#trim"/></svg>修剪体</button>
        <button><svg><use href="#draft"/></svg>拔模</button>
      </div>
      <button class="big"><span class="frame"><svg><use href="#boss"/></svg></span>更多<i class="caret"></i></button>
    </div>
    <div class="foot"><span>特征</span><i class="caret"></i></div>
  </div>
  <div class="group g-sync">
    <div class="body">
      <button class="big"><svg><use href="#moveface"/></svg>移动面</button>
      <div class="list">
        <button><svg><use href="#face"/></svg>偏置区域</button>
        <button><svg><use href="#face"/></svg>替换面</button>
        <button><svg><use href="#facex"/></svg>删除面</button>
      </div>
      <button class="big"><span class="frame"><svg><use href="#cycle"/></svg></span>更多<i class="caret"></i></button>
    </div>
    <div class="foot"><span>同步建模</span><i class="caret"></i></div>
  </div>
  <div class="group g-std">
    <div class="icons">
      <div class="row"><svg><use href="#redsq"/></svg><svg><use href="#layers"/></svg><svg><use href="#layers2"/></svg><i class="vsep"></i><svg><use href="#note"/></svg></div>
      <div class="row"><svg><use href="#okblue"/></svg><svg><use href="#okwork"/></svg><svg><use href="#okorange"/></svg><i class="vsep"></i><svg><use href="#edit"/></svg></div>
    </div>
    <div class="foot"><span>标准...</span><i class="caret"></i></div>
  </div>
  <div class="group g-gear">
    <div class="icons">
      <div class="row"><svg><use href="#gear"/></svg><svg><use href="#gear2"/></svg></div>
      <div class="row"><svg><use href="#pick"/></svg></div>
    </div>
    <div class="foot"><span>齿...</span><i class="caret"></i></div>
  </div>
  <div class="group g-spring">
    <div class="icons">
      <div class="row"><svg><use href="#spring"/></svg><svg><use href="#spring2"/></svg></div>
      <div class="row"><svg><use href="#ring"/></svg><i class="vsep"></i><svg><use href="#scissor"/></svg></div>
    </div>
    <div class="foot"><span>弹...</span><i class="caret"></i></div>
  </div>
  <div class="group g-gear">
    <div class="icons">
      <div class="row"><svg><use href="#mill"/></svg><svg><use href="#millp"/></svg></div>
      <div class="row"><svg><use href="#grid"/></svg><svg><use href="#csys"/></svg></div>
    </div>
    <div class="foot"><span>加...</span><i class="caret"></i></div>
  </div>
  <div class="group g-model">
    <div class="icons">
      <div class="row"><svg><use href="#tri"/></svg><svg><use href="#table"/></svg><svg><use href="#folderp"/></svg><svg><use href="#folderg"/></svg></div>
      <div class="row"><svg><use href="#form"/></svg><svg><use href="#dim"/></svg><i class="vsep"></i><svg class="t" viewBox="0 0 20 20"><path d="M4 3l5-1v5l-3 3-3-2zM10 3l5 1-1 5h-4z" fill="#778" stroke="#334"/><text x="1" y="18" fill="#a33">10H7</text></svg></div>
    </div>
    <div class="foot"><span>建模...</span><i class="caret"></i></div>
  </div>
  <div class="group g-cubes">
    <div class="icons">
      <div class="row"><svg><use href="#cubes"/></svg></div>
      <div class="row"><svg><use href="#cubes"/></svg></div>
    </div>
    <div class="foot only"><i class="caret"></i></div>
  </div>
  <div class="group g-dim">
    <div class="icons">
      <div class="row"><svg><use href="#ibeam"/></svg><i class="vsep"></i><svg><use href="#tx"/></svg>
        <svg class="t" viewBox="0 0 20 20"><text x="3" y="9" fill="#222">1.00</text><text x="3" y="17" fill="#b22">±.05</text></svg>
        <svg class="t" viewBox="0 0 20 20"><text x="3" y="9" fill="#222">1.00</text><text x="3" y="17" fill="#b22">±.03</text></svg>
        <svg class="t" viewBox="0 0 20 20"><text x="3" y="9" fill="#222">1.00</text><text x="3" y="17" fill="#b22">+.05</text></svg>
        <svg class="t" viewBox="0 0 20 20"><text x="3" y="9" fill="#222">1.00</text><text x="3" y="17" fill="#b22">-.03</text></svg>
        <svg><use href="#txb"/></svg><svg><use href="#txp"/></svg>
        <svg class="t" viewBox="0 0 20 20"><text x="2" y="13" fill="#33b">10H7</text></svg>
        <svg class="t" viewBox="0 0 20 20"><text x="2" y="9" fill="#33b">10H7</text><text x="1" y="17" fill="#33b">(0.01)</text></svg>
        <svg class="t" viewBox="0 0 20 20"><text x="2" y="9" fill="#33b">10H7</text><text x="1" y="17" fill="#33b">(.015)</text></svg>
        <svg class="t" viewBox="0 0 20 20"><text x="6" y="9" fill="#33b">10</text><text x="1" y="17" fill="#33b">(.015)</text></svg></div>
      <div class="row"><svg class="t" viewBox="0 0 20 20"><path d="M2 15l5-5h11M2 11v5h5" fill="none" stroke="#c33"/><text x="6" y="8" fill="#c33">R|Ø</text></svg><svg class="t" viewBox="0 0 20 20"><path d="M3 17L17 6M3 12v6h5" fill="none" stroke="#c33"/><text x="4" y="9" fill="#c33">RØ</text></svg><i class="vsep"></i><svg><use href="#dia"/></svg><svg><use href="#dia2"/></svg><svg><use href="#ret"/></svg></div>
    </div>
    <div class="foot"><span>尺寸快速格式化工具 - ...</span><i class="caret"></i></div>
  </div>
  <div class="group g-surf">
    <div class="body"><button class="big"><svg><use href="#surf"/></svg>曲面<i class="caret"></i></button></div>
  </div>
  <div class="group g-asm">
    <div class="body">
      <button class="big" disabled><svg><use href="#proc"/></svg>处理装配</button>
      <button class="big"><svg><use href="#add"/></svg>添加<i class="caret"></i></button>
      <div class="list">
        <button><svg><use href="#constr"/></svg>装配约束</button>
        <button><svg><use href="#movec"/></svg>移动组件</button>
        <button><svg><use href="#arrc"/></svg>阵列组件</button>
      </div>
    </div>
    <div class="foot"><span>装配</span><i class="caret"></i></div>
  </div>
  <div class="group g-measure">
    <div class="body"><button class="big"><svg><use href="#ruler"/></svg>测量</button></div>
    <div class="foot"><span>分...</span><i class="caret"></i></div>
  </div>
  <button class="overflow" aria-label="功能区选项"><i class="caret"></i></button>
</section>

<section class="selbar">
  <button class="menu"><svg><use href="#menu"/></svg>菜单(<u>M</u>)<i class="caret"></i></button>
  <i class="vsep"></i>
  <div class="combo c1"><select aria-label="类型过滤器"><option>无选择过滤器</option></select><i class="caret wide"></i></div>
  <div class="combo c2"><select aria-label="选择范围"><option>整个装配</option></select><i class="caret wide"></i></div>
  <div class="tools">
    <svg><use href="#ghost"/></svg><svg><use href="#ghost2"/></svg><svg><use href="#filter"/></svg><i class="caret near"></i>
    <svg><use href="#ghost3"/></svg><svg><use href="#ghost2"/></svg><svg><use href="#dotcube"/></svg><svg><use href="#marquee"/></svg><span class="dd"><i class="caret"></i></span>
    <svg><use href="#shaded"/></svg><svg class="on"><use href="#cube"/></svg><svg class="on"><use href="#snap"/></svg><svg class="on"><use href="#lend"/></svg><svg class="on"><use href="#lmid"/></svg><svg><use href="#scurve"/></svg><svg class="on"><use href="#pole"/></svg><svg class="on"><use href="#wave"/></svg><svg><use href="#inter"/></svg><svg class="on"><use href="#center"/></svg><svg><use href="#quad"/></svg><svg class="on"><use href="#point"/></svg><svg class="on"><use href="#lmid"/></svg><svg><use href="#onface"/></svg><svg><use href="#mesh"/></svg><svg><use href="#gridp"/></svg>
    <i class="vsep"></i>
    <svg><use href="#zoomb"/></svg><svg><use href="#pan"/></svg><svg><use href="#rotate"/></svg><svg><use href="#persp"/></svg><svg><use href="#ghost4"/></svg><svg><use href="#views"/></svg><span class="dd"><i class="caret"></i></span><svg><use href="#bracket"/></svg><span class="dd"><i class="caret"></i></span><svg><use href="#cubeb"/></svg><span class="dd"><i class="caret"></i></span><svg><use href="#clip"/></svg><span class="dd"><i class="caret"></i></span>
    <i class="vsep"></i>
  </div>
  <button class="overflow" aria-label="选择条选项"><i class="caret"></i></button>
</section>

<main class="work">
  <aside class="rail">
    <button class="cogb" aria-label="资源条选项"><svg><use href="#cog"/></svg></button>
    <button aria-label="装配导航器"><svg><use href="#asmnav"/></svg></button>
    <button aria-label="约束导航器"><svg><use href="#connav"/></svg></button>
    <button class="on" aria-label="部件导航器"><svg><use href="#partnav"/></svg></button>
    <button aria-label="重用库"><svg><use href="#books"/></svg></button>
    <button class="apart" aria-label="HD3D 工具"><svg><use href="#info"/></svg></button>
    <button class="apart" aria-label="Web 浏览器"><svg><use href="#web"/></svg></button>
    <button class="apart" aria-label="历史记录"><svg><use href="#clock"/></svg></button>
    <button aria-label="系统材料"><svg><use href="#rain"/></svg></button>
    <button aria-label="加工向导"><svg><use href="#wand"/></svg></button>
    <button aria-label="机床"><svg><use href="#robot"/></svg></button>
  </aside>

  <section class="panel">
    <div class="phead"><h2>部件导航器</h2><button class="maxi" aria-label="最大化"></button></div>
    <div class="treebox">
      <table class="tree">
        <thead><tr><th class="name">名称<i class="sort"></i></th><th class="fresh">最新</th><th>附注</th></tr></thead>
        <tbody>
          <tr><td><div class="node"><i class="exp"></i><svg><use href="#axis3"/></svg>模型视图</div></td><td></td><td></td></tr>
          <tr><td><div class="node"><i class="exp"></i><svg class="tick"><use href="#check"/></svg><svg><use href="#camera"/></svg>摄像机</div></td><td></td><td></td></tr>
          <tr><td><div class="node"><i class="exp"></i><svg><use href="#folder"/></svg>用户表达式</div></td><td></td><td></td></tr>
          <tr><td><div class="node"><i class="exp"></i><svg><use href="#folder"/></svg>非时间戳记几何体</div></td><td></td><td></td></tr>
          <tr><td><div class="node"><i class="exp open"></i><svg><use href="#folder"/></svg>模型历史记录</div></td><td></td><td></td></tr>
          <tr><td><label class="node child"><input type="checkbox" checked><svg><use href="#csys"/></svg>基准坐标系 (0)</label></td><td><svg class="tick"><use href="#check"/></svg></td><td></td></tr>
          <tr><td><label class="node child dim"><input type="checkbox" checked><svg><use href="#wave"/></svg>样条 (1)</label></td><td><svg class="tick"><use href="#check"/></svg></td><td></td></tr>
          <tr><td><label class="node child bold end"><input type="checkbox" checked><svg><use href="#extr"/></svg>拉伸 (2)</label></td><td><svg class="tick"><use href="#check"/></svg></td><td></td></tr>
        </tbody>
      </table>
      <div class="blank"></div>
      <div class="hscroll"><i></i></div>
    </div>
    <div class="splitter"></div>
    <button class="fold">相关性<svg><use href="#chev"/></svg></button>
    <button class="fold">细节<svg><use href="#chev"/></svg></button>
    <button class="fold">预览<svg><use href="#chev"/></svg></button>
  </section>

  <section class="view">
    <div class="doctabs"><div class="doc"><svg><use href="#part"/></svg><span>_model3.prt</span><svg class="pini"><use href="#pin"/></svg><button aria-label="关闭">×</button></div></div>
    <div class="canvas">
      <svg class="scene" viewBox="582 317 3258 1712" preserveAspectRatio="xMidYMid meet">
        <defs><linearGradient id="skin" gradientUnits="userSpaceOnUse" x1="1490" y1="1090" x2="2864" y2="1242">
          <stop offset="0" stop-color="#c5c400"/><stop offset=".3" stop-color="#c3c300"/><stop offset=".5" stop-color="#bfbf00"/><stop offset=".66" stop-color="#bbbb00"/><stop offset=".74" stop-color="#b5b400"/><stop offset=".805" stop-color="#adac00"/><stop offset=".87" stop-color="#b5b500"/><stop offset=".93" stop-color="#baba00"/><stop offset="1" stop-color="#bcbc00"/>
        </linearGradient></defs>
        <path d="M1507 925C1783 939 2058 950 2334 1003C2554 1040 2812 1122 2892 1242L2856 1571C2776 1451 2518 1369 2298 1332C2022 1279 1747 1268 1471 1255Z" fill="url(#skin)" stroke="#3c3c50" stroke-width="1.200"/>
        <g fill="none" stroke="#2020e8" stroke-width="1.200">
          <path d="M1903 1385L1933 1297M1903 1385L1985 1325M1903 1385L2000 1463M1920 1341L1961 1310 1944 1356 1994 1395 1953 1425 1970 1380Z"/>
          <path d="M1896 1385h14M1903 1378v14" stroke="#0000b0" stroke-width="2.500"/>
          <path d="M1935 1287h6l-7 9h7M1985 1317l8 10M1993 1317l-8 10M2003 1463l4 5 4-5M2007 1468v6"/>
        </g>
        <path d="M1934 1297l-6 11 6 2zM1985 1325l-13 4 3 6zM2001 1464l-13-5 4-6z" fill="#0000c0"/>
        <path d="M684 1915l22 18-7 20-18 13-24-17 8-21z" fill="#d0d0d0" stroke="#aaa"/>
        <path d="M684 1915l-5 14 27 36M706 1933l-25 33M665 1928l34 25" fill="none" stroke="#aaa"/>
        <path d="M658 1947l9-28" stroke="#0a40ff" stroke-width="3"/><path d="M668 1914l-4 12h7z" fill="#0a40ff"/>
        <path d="M658 1949l37 30" stroke="#2a8030" stroke-width="3"/><path d="M696 1979l-10-3 5-7z" fill="#20a020"/>
        <path d="M658 1948l25-17" stroke="#902020" stroke-width="4"/><path d="M690 1926l-6 9-6-7z" fill="#902020"/>
        <circle cx="657" cy="1949" r="4" fill="#ccc" stroke="#888"/>
        <path d="M668 1907h6l-6 8h7" fill="none" stroke="#7070ff"/><path d="M689 1918l6 9M695 1918l-6 9" stroke="#d04040"/><path d="M697 1979l3 4 3-4M700 1983v4" fill="none" stroke="#40a040"/>
      </svg>
    </div>
  </section>
</main>

<footer class="status">
  <span>选择对象并使用 MB3，或者双击某一对象</span>
  <div class="sicons"><svg><use href="#flag"/></svg><svg><use href="#screen"/></svg><svg class="globe"><use href="#globe"/></svg></div>
</footer>
<div class="desk"><i></i></div>
<div class="mark">CSDN @GimiGimmy</div>
</body>
</html>
```
FILE: styles.css
```css
* { box-sizing: border-box; }
body {
  margin: 0;
  min-height: 100vh;
  display: flex;
  flex-direction: column;
  position: relative;
  overflow-x: hidden;
  background: #fff;
  color: #1e1e1e;
  font: 23px/32px "Open Sans", "Noto Sans CJK SC", sans-serif;
}
button {
  margin: 0;
  padding: 0;
  border: 0;
  background: none;
  color: inherit;
  font: inherit;
  white-space: nowrap;
}
svg { display: block; flex: none; width: 16px; height: 16px; }
.defs { position: absolute; width: 0; height: 0; }
.caret {
  display: block;
  flex: none;
  width: 11px;
  height: 7px;
  background: #1e1e1e;
  clip-path: polygon(0 0, 100% 0, 50% 100%);
}
.caret.up { clip-path: polygon(50% 0, 100% 100%, 0 100%); }
.caret.wide { width: 15px; height: 9px; }
.off .caret { background: #b4b4b4; }
.morei { width: 14px; height: 10px; }
.vsep {
  flex: none;
  align-self: stretch;
  width: 7px;
  background: linear-gradient(#d8d8d8, #d8d8d8) center / 1px 100% no-repeat;
}

/* title bar */
.titlebar { display: flex; align-items: center; height: 45px; }
.logo {
  width: 56px;
  padding-left: 4px;
  color: #8aa0ae;
  font: 700 33px/45px "Noto Sans", "Open Sans", sans-serif;
}
.quick { display: flex; align-items: center; height: 37px; }
.cell { width: 23px; display: flex; justify-content: center; }
.drop { width: 22px; display: flex; justify-content: center; }
.named { display: flex; align-items: center; gap: 3px; padding: 0 4px 0 2px; }
.named .caret { margin: 0 2px 0 3px; }
.title { flex: 1; margin: 0; text-align: center; font: inherit; font-size: 25px; }
.brand { color: #009999; font-weight: 700; font-size: 22px; }
.winctl { display: flex; gap: 28px; padding: 0 16px 0 33px; }
.winctl svg { width: 18px; height: 18px; }

/* ribbon tabs */
.tabs { display: flex; height: 44px; background: #dcdcdc; font-size: 28px; line-height: 40px; }
.file { width: 129px; margin-right: 2px; background: #539fb8; color: #fff; }
.tab { padding: 0 13px; }
.tab.on { background: #fff; color: #00688c; border-top: 2px solid #aaa; }
.find {
  display: flex;
  align-items: center;
  width: 252px;
  height: 34px;
  margin: 5px 11px 0 auto;
  padding: 0 5px 0 1px;
  background: #fff;
  border: 1px solid #aaa;
}
.find input {
  flex: 1;
  min-width: 0;
  height: 30px;
  padding: 0;
  border: 0;
  background: none;
  font: 23px/30px "Open Sans", "Noto Sans CJK SC", sans-serif;
}
.find input::placeholder { color: #aaa; }
.find svg { width: 20px; height: 20px; }
.help { display: flex; align-items: center; gap: 10px; padding-right: 9px; }
.ask {
  width: 14px;
  height: 14px;
  border-radius: 50%;
  background: #3a68d8;
  color: #fff;
  font: 700 11px/14px "Open Sans", sans-serif;
}

/* ribbon */
.ribbon {
  display: flex;
  height: 145px;
  padding: 5px 0 4px;
  border-bottom: 1px solid #d8d8d8;
}
.group {
  display: grid;
  grid-template-rows: 111px 24px;
  border-right: 1px solid #d8d8d8;
}
.g-sketch { width: 272px; }
.g-feature { width: 565px; }
.g-sync { width: 270px; }
.g-std { width: 104px; }
.g-gear { width: 52px; }
.g-spring { width: 58px; }
.g-model { width: 98px; }
.g-cubes { width: 29px; }
.g-dim { width: 288px; }
.g-surf { width: 57px; }
.g-asm { width: 291px; }
.g-measure { width: 69px; }
.body { display: grid; align-items: start; }
.g-sketch .body { grid-template-columns: 71px 162px 33px; }
.g-feature .body { grid-template-columns: 98px 56px 38px 125px 76px 109px 46px; padding-left: 9px; }
.g-sync .body { grid-template-columns: 74px 133px 46px; padding-left: 9px; }
.g-asm .body { grid-template-columns: 100px 54px 123px; padding-left: 8px; }
.big { display: flex; flex-direction: column; align-items: center; }
.big > svg { width: 30px; height: 32px; margin-bottom: 6px; }
.big .caret { margin-top: 6px; }
.big:disabled { color: #c8c8c8; }
.frame {
  display: grid;
  place-items: center;
  width: 38px;
  height: 34px;
  margin-bottom: 3px;
  border: 1px solid #d8d8d8;
  border-radius: 4px;
}
.gallery {
  display: grid;
  grid-template: 50px 56px / 52px 54px 54px;
  place-items: center;
  border: 1px solid #d0d0d0;
  height: 108px;
}
.gallery svg { width: 21px; height: 21px; }
.scroller { display: grid; grid-template-rows: 36px 36px 36px; place-items: center; }
.list { display: grid; grid-template-rows: 32px 36px 36px; padding-left: 3px; }
.list button { display: flex; align-items: center; }
.list svg { margin: 0 3px 0 4px; }
.list .caret { margin-left: 10px; }
.icons { display: flex; flex-direction: column; padding: 3px 0 0 3px; }
.row { display: flex; align-items: center; height: 34px; }
.row svg { margin: 0 4px 0 3px; }
.row svg.t { width: 20px; height: 20px; margin: 0 2px 0 1px; }
.row text { font: 7px "Liberation Sans", sans-serif; }
.row .vsep { height: 24px; align-self: center; }
.foot {
  display: grid;
  grid-template-columns: 1fr 31px;
  align-items: center;
  color: #00688c;
}
.foot span {
  display: flex;
  justify-content: center;
  min-width: 0;
  overflow: hidden;
  white-space: nowrap;
  line-height: 32px;
}
.foot .caret { margin-left: 9px; }
.foot.only { padding-left: 0; grid-template-columns: 29px; }
.foot.only .caret { margin-left: 7px; }
.overflow { align-self: flex-end; margin-left: auto; padding: 0 10px 8px 0; }

/* selection bar */
.selbar {
  display: flex;
  align-items: center;
  height: 46px;
  border-bottom: 1px solid #888f8f;
}
.menu { display: flex; align-items: center; padding-left: 10px; width: 133px; }
.menu svg { margin-right: 4px; }
.menu .caret { margin-left: 7px; }
.selbar > .vsep { margin-right: 9px; }
.combo {
  display: flex;
  align-items: center;
  height: 34px;
  padding: 0 11px 0 2px;
  border: 1px solid #999;
}
.c1 { width: 272px; margin-right: 8px; }
.c2 { width: 286px; }
.combo select {
  appearance: none;
  flex: 1;
  min-width: 0;
  padding: 0;
  border: 0;
  background: none;
  color: inherit;
  font: inherit;
  height: 32px;
}
.tools { display: flex; align-items: center; gap: 2px; height: 38px; padding-left: 6px; }
.tools svg { width: 23px; height: 23px; padding: 2px; border: 1px solid transparent; }
.tools svg.on { background: #cce6ea; border-color: #a8d4de; }
.near { margin-right: 2px; }
.dd { display: flex; justify-content: center; width: 20px; }
.tools .vsep { width: 11px; }
.selbar .overflow { align-self: center; padding: 14px 10px 8px 0; }

/* work area */
.work { flex: 1; display: flex; min-height: 0; }
.rail {
  display: flex;
  flex-direction: column;
  width: 33px;
  background: #dcdcdc;
  border-right: 1px solid #999;
}
.rail button { display: grid; place-items: center; height: 43px; padding-left: 4px; }
.rail svg { width: 23px; height: 24px; }
.rail .cogb { height: 26px; margin-bottom: 14px; padding: 0 2px 0 0; }
.rail .cogb svg { width: 13px; height: 13px; }
.rail .on {
  margin: 0 -1px 0 2px;
  padding-left: 2px;
  background: #fff;
  border: 1px solid #999;
  border-right: 0;
}
.rail .apart { margin-top: 10px; }

.panel {
  display: flex;
  flex-direction: column;
  width: 548px;
  padding: 0 9px 6px 5px;
  border-right: 1px solid #889;
}
.phead {
  display: flex;
  align-items: center;
  justify-content: space-between;
  height: 41px;
  padding: 2px 8px 0 4px;
}
.phead h2 { margin: 0; font: 24px/34px "Open Sans", "Noto Sans CJK SC", sans-serif; }
.maxi { width: 22px; height: 20px; border: 2px solid #1e1e1e; border-top-width: 4px; }
.treebox {
  flex: 1;
  display: flex;
  flex-direction: column;
  padding: 1px;
  border: 1px solid #d0d0d0;
  font-size: 24px;
}
.tree { width: 100%; table-layout: fixed; border-collapse: collapse; }
.tree th {
  height: 34px;
  padding: 0 0 0 6px;
  background: #efefef;
  border-bottom: 1px solid #c8c8c8;
  text-align: left;
  font-weight: 400;
}
.tree th + th, .tree td + td { border-left: 1px solid #e0e0e0; }
.tree th.name { width: 358px; }
.tree th.fresh { width: 100px; }
.sort {
  display: inline-block;
  width: 19px;
  height: 10px;
  margin: 0 0 4px 21px;
  background: #1e1e1e;
  clip-path: polygon(50% 0, 100% 100%, 0 100%);
}
.tree td { height: 34px; padding: 0; border-bottom: 1px solid #e6e6e6; }
.tree td + td { padding-left: 6px; }
.tree tbody tr:nth-child(even) { background: #fafafa; }
.node { display: flex; align-items: center; height: 33px; padding-left: 2px; line-height: 33px; }
.node svg { margin-right: 2px; }
svg.tick { width: 12px; height: 14px; }
.node .tick { margin: 0 3px 0 2px; }
.exp {
  width: 15px;
  height: 15px;
  margin-right: 1px;
  border: 1px solid #d4d4d4;
  background:
    linear-gradient(#1e1e1e, #1e1e1e) center / 11px 1px no-repeat,
    linear-gradient(#1e1e1e, #1e1e1e) center / 1px 11px no-repeat,
    #fff;
}
.exp.open { background: linear-gradient(#1e1e1e, #1e1e1e) center / 11px 1px no-repeat, #fff; }
.child { position: relative; padding-left: 40px; }
.child::before {
  content: "";
  position: absolute;
  left: 28px;
  top: 0;
  width: 9px;
  height: 17px;
  border: dotted #999;
  border-width: 0 0 1px 1px;
}
.child input {
  appearance: none;
  width: 12px;
  height: 13px;
  margin: 0 2px 0 0;
  border: 1px solid #111;
  background: #fff;
  display: grid;
}
.child input:checked::before {
  content: "";
  width: 10px;
  height: 11px;
  background: #10c838;
  clip-path: polygon(0 50%, 25% 40%, 42% 62%, 85% 0, 100% 12%, 50% 100%, 28% 100%);
}
.dim { color: #a0a0a0; }
.bold { font-weight: 700; }
.blank {
  flex: 1;
  background:
    linear-gradient(90deg, transparent 358px, #e0e0e0 358px, #e0e0e0 359px, transparent 359px, transparent 458px, #e0e0e0 458px, #e0e0e0 459px, transparent 459px),
    repeating-linear-gradient(#fff 0, #fff 33px, #e6e6e6 33px, #e6e6e6 34px, #fafafa 34px, #fafafa 67px, #e6e6e6 67px, #e6e6e6 68px);
}
.hscroll { height: 34px; padding: 14px 60px 0 34px; background: #efefef; }
.hscroll i { display: block; height: 6px; border-radius: 3px; background: #848484; }
.splitter { height: 6px; background: #dcdcdc; border: 1px solid #aaa; }
.fold {
  display: flex;
  align-items: center;
  justify-content: space-between;
  height: 40px;
  padding: 0 6px 0 7px;
  border-bottom: 2px solid #d0d0d0;
  color: #00688c;
  font-size: 30px;
  line-height: 36px;
}
.fold svg { width: 26px; height: 20px; margin-bottom: 2px; }

/* graphics window */
.view { flex: 1; display: flex; flex-direction: column; min-width: 0; }
.doctabs { display: flex; height: 37px; border-bottom: 3px solid #539fb8; }
.doc {
  display: flex;
  align-items: center;
  width: 200px;
  padding-left: 5px;
  background: #539fb8;
  color: #fff;
  font-size: 24px;
}
.doc span { margin: 2px 7px 0 4px; line-height: 28px; }
.doc .pini { width: 9px; height: 12px; }
.doc button { margin-left: 5px; font: 700 20px/20px "Open Sans", sans-serif; }
.canvas { flex: 1; display: grid; background: linear-gradient(#b3b4b6 0, #e6e7e9 75%, #e7e8ea 100%); }
.scene { width: 100%; height: 100%; }

/* status bar */
.status {
  display: flex;
  align-items: center;
  justify-content: space-between;
  height: 36px;
  padding: 0 26px 4px 3px;
  border-top: 1px solid #aaa;
  font-weight: 700;
}
.sicons { display: flex; gap: 4px; }
.globe { margin-left: 7px; }
.desk {
  display: flex;
  align-items: flex-end;
  height: 12px;
  border-top: 2px solid #aab8b8;
  background: linear-gradient(90deg, #deefa6 0, #dcedaa 10%, #d2ebbc 14%, #d8ecae 21%, #cfe8e0 24%, #d6e4ee 26%, #cfe1ea 50%, #d4e6f2 100%);
}
.desk i { width: 72px; height: 4px; margin-left: 1710px; background: #eef3f8; }
.mark {
  position: absolute;
  right: 4px;
  bottom: 20px;
  color: rgba(222, 224, 224, .85);
  font: 300 73px/84px Roboto, sans-serif;
  text-shadow: 1px 1px 1px rgba(110, 110, 110, .8), -1px -1px 1px rgba(255, 255, 255, .8);
  white-space: nowrap;
  pointer-events: none;
}
```
